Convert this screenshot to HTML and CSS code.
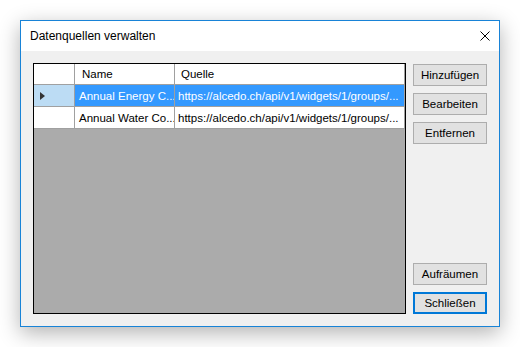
FILE: index.html
```html
<!DOCTYPE html>
<html lang="de">
<head>
    <meta charset="UTF-8">
    <title>Datenquellen verwalten</title>
    <link rel="stylesheet" href="styles.css">
</head>
<body>
    <div class="window">
        <div class="titlebar">
            <span class="title">Datenquellen verwalten</span>
            <svg class="close" width="10" height="10" viewBox="0 0 10 10">
                <path d="M0.5 0.5 L9.5 9.5 M9.5 0.5 L0.5 9.5" stroke="#000" stroke-width="1" fill="none"/>
            </svg>
        </div>
        <div class="client">
            <div class="grid">
                <div class="row header">
                    <div class="cell rowhead"></div>
                    <div class="cell name">Name</div>
                    <div class="cell source">Quelle</div>
                </div>
                <div class="row selected">
                    <div class="cell rowhead"><span class="arrow"></span></div>
                    <div class="cell name">Annual Energy C...</div>
                    <div class="cell source">https://alcedo.ch/api/v1/widgets/1/groups/...</div>
                </div>
                <div class="row">
                    <div class="cell rowhead"></div>
                    <div class="cell name">Annual Water Co...</div>
                    <div class="cell source">https://alcedo.ch/api/v1/widgets/1/groups/...</div>
                </div>
            </div>
            <div class="buttons">
                <button class="btn">Hinzufügen</button>
                <button class="btn">Bearbeiten</button>
                <button class="btn">Entfernen</button>
                <div class="spacer"></div>
                <button class="btn">Aufräumen</button>
                <button class="btn default">Schließen</button>
            </div>
        </div>
    </div>
</body>
</html>
```

FILE: styles.css
```css
* {
    margin: 0;
    padding: 0;
    box-sizing: border-box;
}

body {
    font-family: "Liberation Sans", Arial, sans-serif;
    font-size: 11.5px;
    color: #000;
    background-color: #fff;
    padding: 20px;
}

.window {
    width: 480px;
    height: 307px;
    border: 1px solid #1883d7;
    background-color: #f0f0f0;
    box-shadow: 0 6px 20px rgba(0, 0, 0, 0.3);
    display: flex;
    flex-direction: column;
}

.titlebar {
    height: 30px;
    background-color: #fff;
    display: flex;
    align-items: center;
    justify-content: space-between;
    padding: 0 9px 0 9px;
}

.title {
    font-size: 12px;
}

.close {
    display: block;
}

.client {
    flex: 1;
    display: flex;
    gap: 7px;
    padding: 12px;
}

.grid {
    width: 373px;
    height: 251px;
    border: 1px solid #000;
    background-color: #ababab;
}

.row {
    display: flex;
    height: 22px;
    background-color: #fff;
}

.row.header {
    height: 21px;
}

.cell {
    border-right: 1px solid #a0a0a0;
    border-bottom: 1px solid #a0a0a0;
    white-space: nowrap;
    overflow: hidden;
    display: flex;
    align-items: center;
}

.rowhead {
    width: 41px;
    padding-left: 6px;
}

.name {
    width: 100px;
    padding-left: 4px;
}

.source {
    width: 230px;
    padding-left: 3px;
}

.header .name {
    padding-left: 7px;
}

.header .source {
    padding-left: 6px;
}

.selected .rowhead {
    background-color: #bcdcf4;
}

.selected .name,
.selected .source {
    background-color: #3399ff;
    color: #fff;
}

.arrow {
    width: 0;
    height: 0;
    border-top: 4px solid transparent;
    border-bottom: 4px solid transparent;
    border-left: 5px solid #333;
}

.buttons {
    width: 74px;
    display: flex;
    flex-direction: column;
    gap: 7px;
    padding-top: 1px;
}

.spacer {
    flex: 1;
}

.btn {
    height: 22px;
    font-family: inherit;
    font-size: 11.5px;
    color: #000;
    background-color: #e1e1e1;
    border: 1px solid #adadad;
}

.btn.default {
    border: 2px solid #0078d7;
}
```
